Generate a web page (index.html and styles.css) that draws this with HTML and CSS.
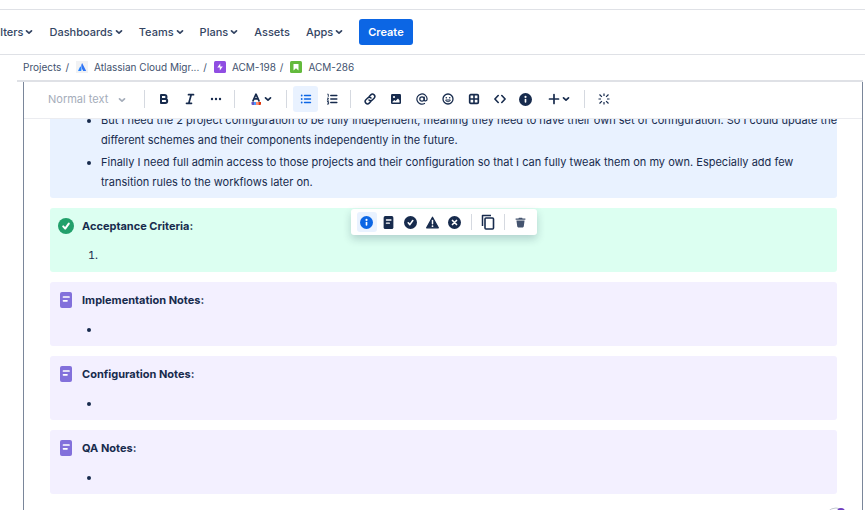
FILE: index.html
```html
<!DOCTYPE html>
<html lang="en">
<head>
    <meta charset="UTF-8">
    <meta name="viewport" content="width=device-width, initial-scale=1.0">
    <title>ACM-286</title>
    <link rel="stylesheet" href="styles.css">
</head>
<body>
    <!-- shared icon shapes -->
    <svg class="sprite" aria-hidden="true">
        <symbol id="chevron" viewBox="0 0 8 8">
            <path d="M1.500 2.800 4 5.200l2.500-2.400" fill="none" stroke="currentColor" stroke-width="1.700" stroke-linecap="round" stroke-linejoin="round"/>
        </symbol>
        <symbol id="info" viewBox="0 0 16 16">
            <circle cx="8" cy="8" r="8" fill="currentColor"/>
            <circle cx="8" cy="4.800" r="1.300" fill="#fff"/>
            <rect x="7" y="7" width="2" height="5" rx="1" fill="#fff"/>
        </symbol>
        <symbol id="note" viewBox="0 0 16 16">
            <rect x="2" y="0" width="12" height="16" rx="2" fill="currentColor"/>
            <path d="M5.500 5h5.500M5.500 8.800h3.500" stroke="#fff" stroke-width="1.700" stroke-linecap="round"/>
        </symbol>
        <symbol id="check" viewBox="0 0 16 16">
            <circle cx="8" cy="8" r="8" fill="currentColor"/>
            <path d="M5.200 8.400 7.200 10.600 10.800 5.600" fill="none" stroke="#fff" stroke-width="2" stroke-linecap="round" stroke-linejoin="round"/>
        </symbol>
    </svg>

    <header class="top-nav">
        <nav class="nav-links">
            <a href="#">Filters<svg class="chevron"><use href="#chevron"/></svg></a>
            <a href="#">Dashboards<svg class="chevron"><use href="#chevron"/></svg></a>
            <a href="#">Teams<svg class="chevron"><use href="#chevron"/></svg></a>
            <a href="#">Plans<svg class="chevron"><use href="#chevron"/></svg></a>
            <a href="#">Assets</a>
            <a href="#">Apps<svg class="chevron"><use href="#chevron"/></svg></a>
        </nav>
        <button class="create">Create</button>
    </header>

    <nav class="breadcrumbs" aria-label="Breadcrumbs">
        <a href="#">Projects</a>
        <span class="slash">/</span>
        <a href="#">
            <svg class="crumb-icon" viewBox="0 0 12 12"><rect width="12" height="12" fill="#f1f2f4"/><path d="M4.300 5.200 2 10h3.200c.7-1.800.3-3.600-.9-4.800z" fill="#2684ff"/><path d="M6.100 2C5 4 5 5.800 5.900 7.500L7.200 10H10.200z" fill="#2f74f5"/></svg>
            Atlassian Cloud Migr...
        </a>
        <span class="slash">/</span>
        <a href="#">
            <svg class="crumb-icon" viewBox="0 0 12 12"><rect width="12" height="12" rx="1.500" fill="#904ee2"/><path d="M6.300 2.500 3.300 6.500h2.500v3l3-4H6.300z" fill="#fff"/></svg>
            ACM-198
        </a>
        <span class="slash">/</span>
        <a href="#">
            <svg class="crumb-icon" viewBox="0 0 12 12"><rect width="12" height="12" rx="1.500" fill="#63ba3c"/><path d="M3.500 3h5v6.500L6 7.200 3.500 9.500z" fill="#fff"/></svg>
            ACM-286
        </a>
    </nav>

    <main class="editor-wrap">
        <div class="editor">
            <div class="toolbar">
                <div class="text-style">
                    <select aria-label="Text style" disabled>
                        <option>Normal text</option>
                    </select>
                    <svg class="chevron"><use href="#chevron"/></svg>
                </div>
                <span class="separator"></span>
                <button aria-label="Bold"><svg viewBox="0 0 12 12"><path d="M3 2h3.500a2 2 0 0 1 0 4H3zM3 6h4.200a2 2 0 0 1 0 4H3z" fill="none" stroke="currentColor" stroke-width="2" stroke-linejoin="round"/></svg></button>
                <button aria-label="Italic"><svg viewBox="0 0 12 12"><path d="M4.500 1.700h5M2.500 10.300h5M7.200 1.700 4.800 10.300" fill="none" stroke="currentColor" stroke-width="1.700" stroke-linecap="round"/></svg></button>
                <button aria-label="More formatting"><svg viewBox="0 0 12 12" fill="currentColor"><circle cx="2" cy="6" r="1.200"/><circle cx="6" cy="6" r="1.200"/><circle cx="10" cy="6" r="1.200"/></svg></button>
                <span class="separator"></span>
                <button class="wide" aria-label="Text color">
                    <svg viewBox="0 0 12 12"><path d="M3 7.800 6 1.200l3 6.600M4 5.900h4" fill="none" stroke="currentColor" stroke-width="1.700" stroke-linecap="round" stroke-linejoin="round"/><path d="M1.500 9H4v3H2.500a1 1 0 0 1-1-1z" fill="#6554c0"/><path d="M4 9h2v3H4z" fill="#4c9aff"/><path d="M6 9h2.500v3H6z" fill="#ff8f73"/><path d="M8.500 9H11v2a1 1 0 0 1-1 1H8.500z" fill="#de350b"/></svg>
                    <svg class="chevron"><use href="#chevron"/></svg>
                </button>
                <span class="separator"></span>
                <button class="active" aria-label="Bullet list"><svg viewBox="0 0 12 12"><path d="M4.500 2.500h6M4.500 6h6M4.500 9.500h6" stroke="currentColor" stroke-width="1.400" stroke-linecap="round"/><g fill="currentColor"><circle cx="1.700" cy="2.500" r=".9"/><circle cx="1.700" cy="6" r=".9"/><circle cx="1.700" cy="9.500" r=".9"/></g></svg></button>
                <button aria-label="Numbered list"><svg viewBox="0 0 12 12"><path d="M4.800 2.500h6M4.800 6h6M4.800 9.500h6" stroke="currentColor" stroke-width="1.500" stroke-linecap="round"/><path d="M1.300 1.200h1v2.600M1 5.200h1.600L1.200 7.200h1.600M1 8.500h1.600v2.600H1M1.500 9.800h1" fill="none" stroke="currentColor" stroke-width=".9"/></svg></button>
                <span class="separator"></span>
                <button aria-label="Link"><svg viewBox="0 0 12 12"><g fill="none" stroke="currentColor" stroke-width="1.500" stroke-linecap="round"><path d="M5.200 3.500 6.800 1.900a2.300 2.300 0 0 1 3.300 3.300L8.300 7a2.300 2.300 0 0 1-3.300 0"/><path d="M6.800 8.500 5.200 10.100A2.300 2.300 0 0 1 1.900 6.800L3.700 5A2.300 2.300 0 0 1 7 5"/></g></svg></button>
                <button aria-label="Image"><svg viewBox="0 0 12 12"><rect x="1" y="1" width="10" height="10" rx="1.200" fill="currentColor"/><circle cx="4" cy="4" r="1.100" fill="#fff"/><path d="M2.500 9.500v-.8L4.300 7l1.200 1L8 5.500l1.500 2v2z" fill="#fff"/></svg></button>
                <button aria-label="Mention"><svg viewBox="0 0 12 12"><g fill="none" stroke="currentColor" stroke-width="1.200" stroke-linecap="round"><circle cx="6" cy="6" r="2.200"/><path d="M8.200 4v2.700c0 1.800 2.900 1.600 2.900-.7A5.100 5.100 0 1 0 8.500 10.500"/></g></svg></button>
                <button aria-label="Emoji"><svg viewBox="0 0 12 12"><circle cx="6" cy="6" r="5" fill="none" stroke="currentColor" stroke-width="1.300"/><circle cx="4.300" cy="4.700" r=".8" fill="currentColor"/><circle cx="7.700" cy="4.700" r=".8" fill="currentColor"/><path d="M3.600 7c.7 2.200 4.100 2.200 4.800 0z" fill="none" stroke="currentColor" stroke-linejoin="round"/></svg></button>
                <button aria-label="Table"><svg viewBox="0 0 12 12"><rect x="1.700" y="1.700" width="8.600" height="8.600" rx="1" fill="none" stroke="currentColor" stroke-width="1.700"/><path d="M6 2v8M2 6h8" stroke="currentColor" stroke-width="1.600"/></svg></button>
                <button aria-label="Code snippet"><svg viewBox="0 0 12 12"><path d="M4.200 2.500.9 6l3.300 3.500M7.800 2.500 11.100 6 7.800 9.500" fill="none" stroke="currentColor" stroke-width="1.600" stroke-linecap="round" stroke-linejoin="round"/></svg></button>
                <button aria-label="Info panel"><svg class="info-icon"><use href="#info"/></svg></button>
                <button class="wide" aria-label="Insert">
                    <svg viewBox="0 0 12 12"><path d="M6 1.500v9M1.500 6h9" stroke="currentColor" stroke-width="1.700" stroke-linecap="round"/></svg>
                    <svg class="chevron"><use href="#chevron"/></svg>
                </button>
                <span class="separator"></span>
                <button aria-label="Editor options"><svg viewBox="0 0 12 12"><path d="M6 .5v2.500M6 9v2.500M.5 6H3M9 6h2.500M1.500 1.500l2.400 2.400M8.100 8.100l2.400 2.400M10.500 1.500 8.100 3.900M3.900 8.100l-2.400 2.400" stroke="currentColor" stroke-width="1.200"/></svg></button>
            </div>

            <div class="content">
                <section class="panel info">
                    <ul>
                        <li>But I need the 2 project configuration to be fully independent, meaning they need to have their own set of configuration. So I could update the<br>different schemes and their components independently in the future.</li>
                        <li>Finally I need full admin access to those projects and their configuration so that I can fully tweak them on my own. Especially add few<br>transition rules to the workflows later on.</li>
                    </ul>
                </section>

                <section class="panel success">
                    <h2><svg class="panel-icon"><use href="#check"/></svg>Acceptance Criteria:</h2>
                    <ol>
                        <li></li>
                    </ol>
                    <div class="panel-toolbar">
                        <button class="active" aria-label="Info"><svg><use href="#info"/></svg></button>
                        <button aria-label="Note"><svg><use href="#note"/></svg></button>
                        <button aria-label="Success"><svg><use href="#check"/></svg></button>
                        <button aria-label="Warning"><svg viewBox="0 0 16 16"><path d="M8 1.500 15.200 14.500H.8z" fill="currentColor" stroke="currentColor" stroke-width="1.500" stroke-linejoin="round"/><path d="M8 5.500v4" stroke="#fff" stroke-width="1.800" stroke-linecap="round"/><circle cx="8" cy="12.500" r="1.100" fill="#fff"/></svg></button>
                        <button aria-label="Error"><svg viewBox="0 0 16 16"><circle cx="8" cy="8" r="8" fill="currentColor"/><path d="m5.500 5.500 5 5M10.500 5.500l-5 5" stroke="#fff" stroke-width="2" stroke-linecap="round"/></svg></button>
                        <span class="separator"></span>
                        <button aria-label="Copy"><svg class="copy-icon" viewBox="0 0 14 16"><path d="M1.500 12V1.500H10" fill="none" stroke="currentColor" stroke-width="1.500" stroke-linejoin="round"/><rect x="4" y="4" width="8.500" height="11" rx="1" fill="none" stroke="currentColor" stroke-width="1.600"/></svg></button>
                        <span class="separator"></span>
                        <button class="remove" aria-label="Remove"><svg viewBox="0 0 16 16"><path d="M2 4.500V3.200h3.500L6 2h4l.5 1.200H14v1.300zM3 5.500h10l-1 7.500a1.200 1.200 0 0 1-1.200 1H5.200A1.200 1.200 0 0 1 4 13z" fill="currentColor"/></svg></button>
                    </div>
                </section>

                <section class="panel note">
                    <h2><svg class="panel-icon"><use href="#note"/></svg>Implementation Notes:</h2>
                    <ul>
                        <li></li>
                    </ul>
                </section>

                <section class="panel note">
                    <h2><svg class="panel-icon"><use href="#note"/></svg>Configuration Notes:</h2>
                    <ul>
                        <li></li>
                    </ul>
                </section>

                <section class="panel note">
                    <h2><svg class="panel-icon"><use href="#note"/></svg>QA Notes:</h2>
                    <ul>
                        <li></li>
                    </ul>
                </section>
            </div>
        </div>
    </main>

    <svg class="helper" viewBox="0 0 24 24" aria-hidden="true">
        <circle cx="11" cy="12" r="11" fill="#fff" stroke="#c1c7d0"/>
        <circle cx="16" cy="5" r="4" fill="#6e3fc0"/>
        <circle cx="16" cy="4" r="1" fill="#fff"/>
    </svg>
</body>
</html>
```
FILE: styles.css
```css
* {
    box-sizing: border-box;
}
body {
    display: flex;
    flex-direction: column;
    height: 100vh;
    margin: 0;
    overflow: hidden;
    background-color: #fff;
    color: #172b4d;
    font-family: Inter, "Liberation Sans", sans-serif;
    font-size: 11px;
}
a {
    color: #42526e;
    text-decoration: none;
}
button {
    display: flex;
    align-items: center;
    justify-content: center;
    padding: 0;
    border: none;
    border-radius: 3px;
    background: none;
    color: #172b4d;
    font: inherit;
    cursor: pointer;
}
.sprite {
    display: none;
}
.chevron {
    flex: none;
    width: 8px;
    height: 8px;
}

/* top navigation */
.top-nav {
    display: flex;
    flex: none;
    align-items: center;
    gap: 16px;
    height: 46px;
    margin-top: 9px;
    border-top: 1px solid #dfe1e6;
    border-bottom: 1px solid #dfe1e6;
}
.nav-links {
    display: flex;
    gap: 16px;
    margin-left: -9px;
}
.nav-links a {
    display: flex;
    align-items: center;
    gap: 2px;
    color: #344563;
    font-weight: 500;
}
.create {
    height: 26px;
    padding: 0 9px;
    background-color: #0c66e4;
    color: #fff;
    font-weight: 600;
}

/* breadcrumbs */
.breadcrumbs {
    display: flex;
    flex: none;
    align-items: center;
    gap: 4px;
    height: 25px;
    padding: 0 0 2px 23px;
    font-size: 10px;
}
.breadcrumbs a {
    display: flex;
    align-items: center;
    gap: 6px;
}
.slash {
    margin-right: 3px;
    color: #42526e;
}
.crumb-icon {
    width: 12px;
    height: 12px;
}

/* editor */
.editor-wrap {
    display: flex;
    flex: 1;
    min-height: 0;
    margin: 0 2px 0 17px;
    padding-left: 6px;
    border-top: 2px solid #dfe1e6;
}
.editor {
    display: flex;
    flex: 1;
    flex-direction: column;
    min-width: 0;
    border: solid #7a869a;
    border-width: 0 1px;
}
.toolbar {
    display: flex;
    flex: none;
    align-items: center;
    gap: 1px;
    height: 37px;
    padding: 0 0 2px 24px;
    border-bottom: 1px solid #ebecf0;
}
.toolbar button {
    width: 25px;
    height: 26px;
}
.toolbar button.wide {
    gap: 2px;
    width: 39px;
}
.toolbar svg {
    width: 12px;
    height: 12px;
}
.toolbar .chevron {
    width: 8px;
    height: 8px;
}
.toolbar .info-icon {
    width: 13px;
    height: 13px;
}
.separator {
    flex: none;
    width: 1px;
    height: 18px;
    margin: 0 5px;
    background-color: #d5d9e0;
}
.toolbar .active,
.panel-toolbar .active {
    background-color: #e9f2ff;
    color: #0c66e4;
}
.text-style {
    position: relative;
    width: 90px;
    color: #a5adba;
}
.text-style select {
    width: 100%;
    padding: 0;
    border: none;
    appearance: none;
    background: none;
    color: inherit;
    font: inherit;
    opacity: 1;
}
.text-style .chevron {
    position: absolute;
    top: 4px;
    right: 12px;
}

/* document */
.content {
    flex: 1;
    min-height: 0;
    padding: 0 25px 0 26px;
    overflow: hidden;
    line-height: 20px;
}
.panel {
    position: relative;
    margin-bottom: 10px;
    padding: 8px 0 7px 8px;
    border-radius: 3px;
}
.panel.info {
    margin-top: -17px;
    padding-bottom: 6px;
    background-color: #e9f2ff;
    white-space: nowrap;
}
.panel.success {
    background-color: #dcfff1;
}
.panel.note {
    background-color: #f3f0ff;
}
.panel h2 {
    display: flex;
    align-items: center;
    gap: 8px;
    margin: 0 0 9px;
    font-size: 11px;
    font-weight: 700;
}
.panel ul,
.panel ol {
    margin: 0;
    padding-left: 43px;
}
.panel li {
    min-height: 20px;
}
.panel li + li {
    margin-top: 2px;
}
.panel-icon {
    width: 16px;
    height: 16px;
}
.success .panel-icon {
    color: #22a06b;
}
.note .panel-icon {
    color: #8270db;
}

/* floating panel controls */
.panel-toolbar {
    position: absolute;
    top: 1px;
    left: 50%;
    display: flex;
    align-items: center;
    gap: 2px;
    height: 26px;
    padding: 0 6px;
    border-radius: 3px;
    background-color: #fff;
    box-shadow: 0 4px 8px rgba(9, 30, 66, 0.2);
    transform: translateX(-50%);
}
.panel-toolbar button {
    width: 20px;
    height: 20px;
}
.panel-toolbar svg {
    width: 13px;
    height: 13px;
}
.panel-toolbar .copy-icon {
    width: 14px;
    height: 16px;
}
.panel-toolbar .separator {
    height: 16px;
    margin: 0 4px;
}
.panel-toolbar .remove {
    color: #44546f;
}

.helper {
    position: fixed;
    right: 16px;
    bottom: -21px;
    width: 24px;
    height: 24px;
}
```
